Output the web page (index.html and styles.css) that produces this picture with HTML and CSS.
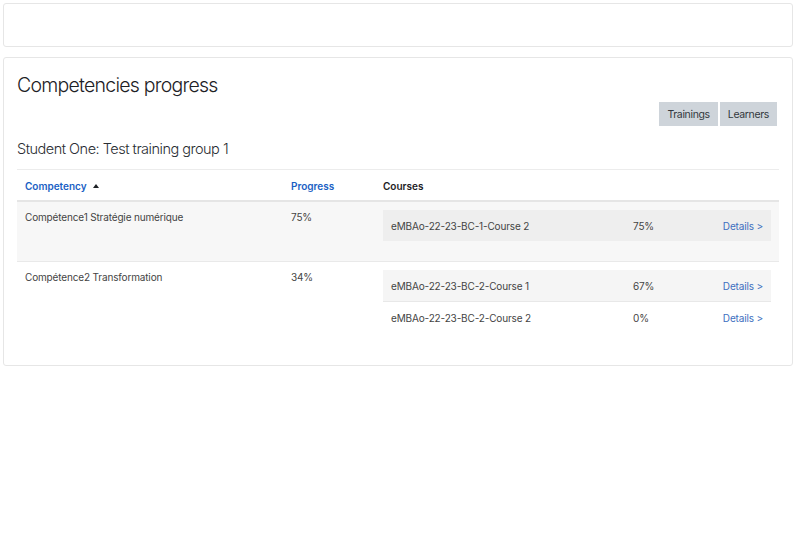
FILE: index.html
```html
<!DOCTYPE html>
<html>
<head>
<meta charset="utf-8">
<link rel="stylesheet" href="styles.css">
</head>
<body>
<div class="card card-top"></div>
<div class="card card-main">
  <h2 class="title">Competencies progress</h2>
  <div class="btn-row">
    <button class="btn">Trainings</button>
    <button class="btn">Learners</button>
  </div>
  <h3 class="subtitle">Student One: Test training group 1</h3>
  <table class="comp-table">
    <thead>
      <tr>
        <th class="col-comp"><a class="sort">Competency</a><span class="caret"></span></th>
        <th class="col-prog"><a class="sort">Progress</a></th>
        <th class="col-courses">Courses</th>
      </tr>
    </thead>
    <tbody>
      <tr class="striped">
        <td>Compétence1 Stratégie numérique</td>
        <td>75%</td>
        <td class="courses-cell">
          <table class="course-table">
            <tr class="c-dark"><td class="c-name">eMBAo-22-23-BC-1-Course 2</td><td class="c-pct">75%</td><td class="c-det"><a>Details &gt;</a></td></tr>
          </table>
        </td>
      </tr>
      <tr>
        <td>Compétence2 Transformation</td>
        <td>34%</td>
        <td class="courses-cell">
          <table class="course-table">
            <tr class="c-light"><td class="c-name">eMBAo-22-23-BC-2-Course 1</td><td class="c-pct">67%</td><td class="c-det"><a>Details &gt;</a></td></tr>
            <tr class="c-white"><td class="c-name">eMBAo-22-23-BC-2-Course 2</td><td class="c-pct">0%</td><td class="c-det"><a>Details &gt;</a></td></tr>
          </table>
        </td>
      </tr>
    </tbody>
  </table>
</div>
</body>
</html>
```

FILE: styles.css
```css
html, body {
  margin: 0;
  padding: 0;
  background: #fff;
}
body {
  padding: 3px 7px 0 3px;
  font-family: Inter, "Liberation Sans", sans-serif;
  color: #1d2125;
}
.card {
  border: 1px solid #e6e6e6;
  border-radius: 3px;
  background: #fff;
}
.card-top {
  height: 42px;
  margin-bottom: 10px;
}
.card-main {
  padding: 13px 13px 12px 13px;
}
.title {
  margin: 2px 0 0 0;
  font-size: 19.5px;
  font-weight: 300;
  letter-spacing: -0.75px;
  line-height: 24px;
  color: #1d2125;
}
.btn-row {
  display: flex;
  justify-content: flex-end;
  gap: 2px;
  margin-top: 5px;
  padding-right: 2px;
}
.btn {
  font-family: inherit;
  font-size: 10.5px;
  letter-spacing: -0.35px;
  color: #33383d;
  background: #ced4da;
  border: 0;
  border-radius: 0;
  height: 24px;
  padding: 0 8px;
}
.subtitle {
  margin: 14px 0 0 0;
  font-size: 14.5px;
  font-weight: 300;
  letter-spacing: -0.5px;
  line-height: 18px;
  color: #2a2e33;
}
.comp-table {
  width: 100%;
  margin-top: 11px;
  border-collapse: collapse;
  font-size: 10px;
  letter-spacing: -0.15px;
  color: #444;
}
.comp-table > thead > tr > th {
  text-align: left;
  font-weight: 600;
  letter-spacing: 0;
  padding: 10px 8px 8px 8px;
  border-top: 1px solid #ececec;
  border-bottom: 2px solid #e5e5e5;
  line-height: 12px;
  color: #1d2125;
}
.col-comp { width: 250px; }
.col-prog { width: 76px; }
.sort {
  color: #1a5fc4;
}
.caret {
  display: inline-block;
  width: 0;
  height: 0;
  margin-left: 6px;
  vertical-align: 2px;
  border-left: 3px solid transparent;
  border-right: 3px solid transparent;
  border-bottom: 4px solid #1d2125;
}
.comp-table > tbody > tr > td {
  vertical-align: top;
  padding: 8px 8px 8px 8px;
  line-height: 14px;
  border-top: 1px solid #e9e9e9;
}
.comp-table > tbody > tr:first-child > td {
  border-top: 0;
}
.comp-table > tbody > tr.striped > td {
  background: #f7f7f7;
}
.comp-table > tbody > tr > td.courses-cell {
  padding: 8px 8px 20px 8px;
}
.course-table {
  width: 100%;
  border-collapse: collapse;
  font-size: 10px;
  color: #444;
}
.course-table td {
  height: 31px;
  padding: 0 8px;
  line-height: 14px;
  vertical-align: middle;
}
.c-dark td { background: #eeeeee; }
.c-light td { background: #f5f5f5; }
.c-white td { background: #fff; border-top: 1px solid #e8e8e8; }
.c-name { width: 226px; }
.c-pct { width: 70px; }
.c-det { text-align: right; }
.c-det a { color: #3d6fc0; }
```
